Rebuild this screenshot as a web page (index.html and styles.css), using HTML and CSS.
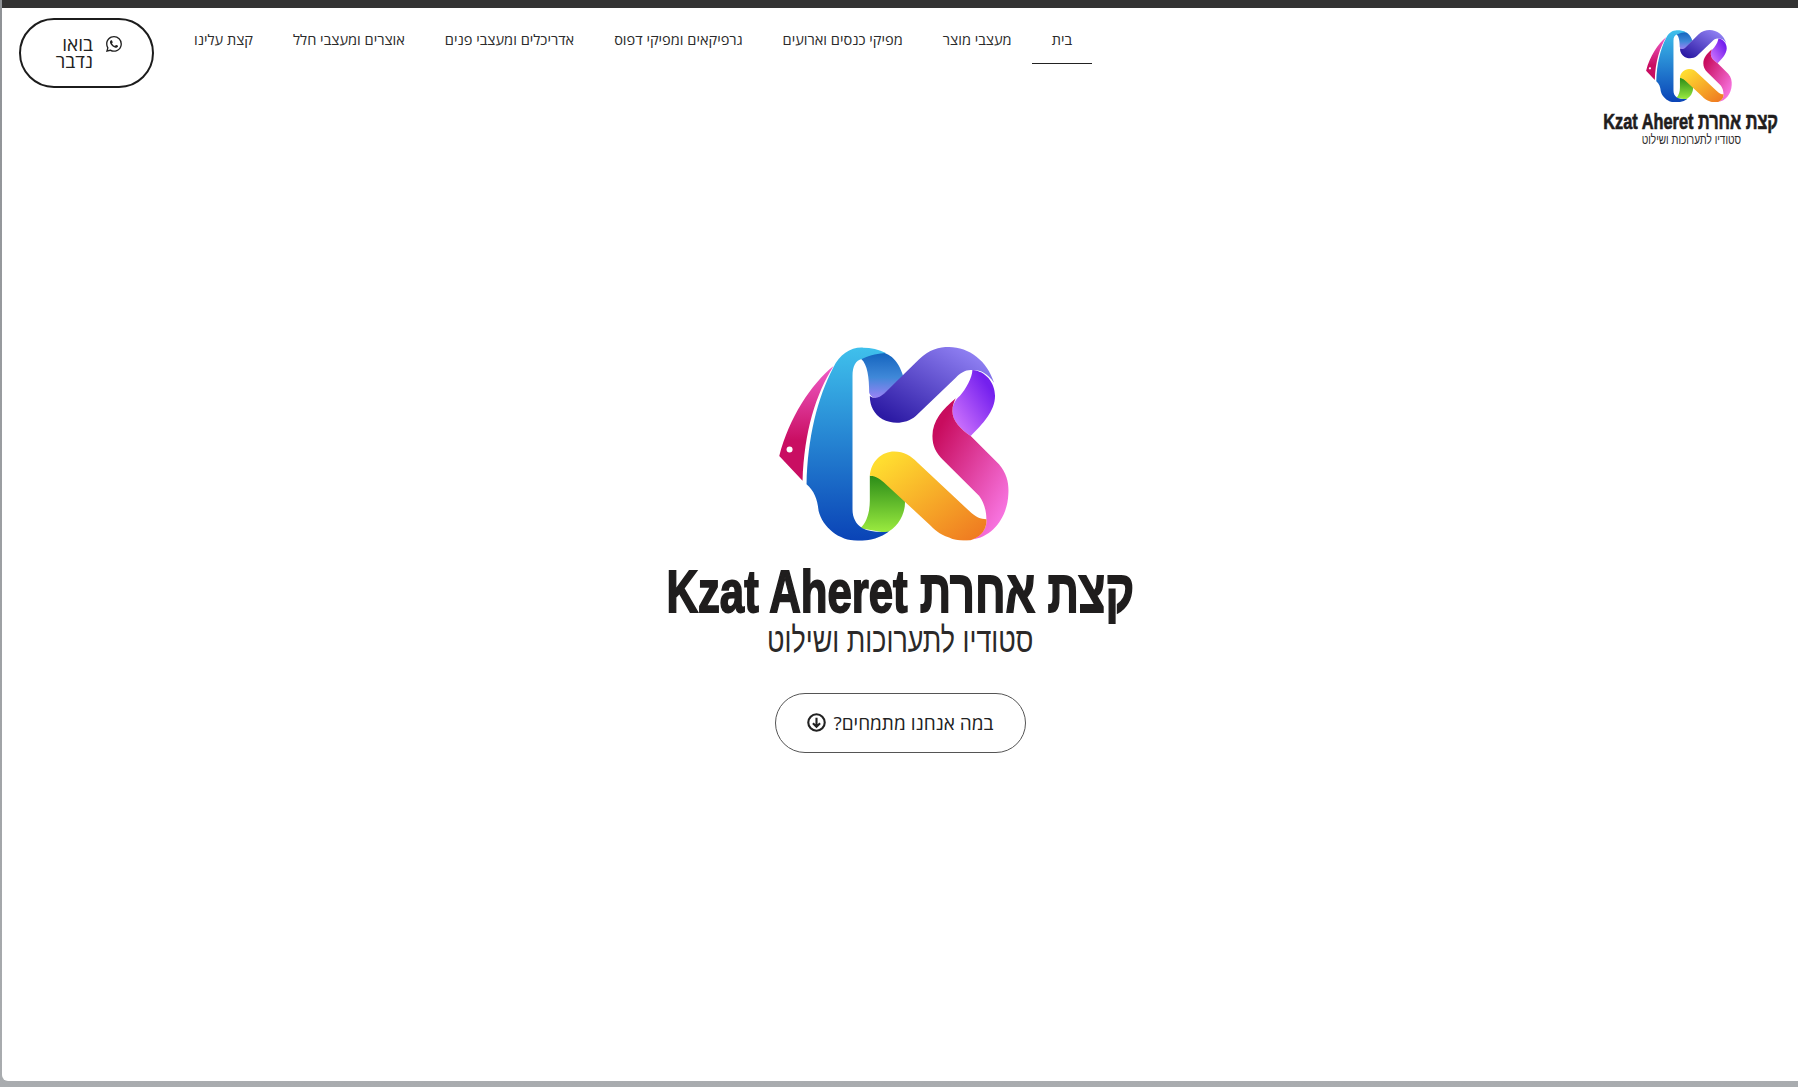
FILE: index.html
```html
<!DOCTYPE html>
<html lang="he" dir="rtl">
<head>
  <meta charset="UTF-8">
  <meta name="viewport" content="width=device-width, initial-scale=1.0">
  <title>קצת אחרת</title>
  <link rel="stylesheet" href="styles.css">
</head>
<body>
  <svg class="defs" width="0" height="0" aria-hidden="true">
    <defs>
      <linearGradient id="gFin" x1="0" y1="0" x2="0" y2="1"><stop offset="0" stop-color="#f05cc8"/><stop offset=".65" stop-color="#c90e62"/></linearGradient>
      <linearGradient id="gBlue" x1="0" y1="0" x2="0" y2="1"><stop offset="0" stop-color="#3fc0ec"/><stop offset="1" stop-color="#0a43b6"/></linearGradient>
      <linearGradient id="gTop" x1="0" y1="0" x2="0" y2="1"><stop offset="0" stop-color="#1262bd"/><stop offset=".55" stop-color="#3f88d8"/><stop offset="1" stop-color="#9a82f5"/></linearGradient>
      <linearGradient id="gPurple" x1="0" y1="1" x2="1" y2="0"><stop offset=".1" stop-color="#2c1aa4"/><stop offset="1" stop-color="#9f90ff"/></linearGradient>
      <linearGradient id="gViolet" x1="1" y1="0" x2="0" y2="1"><stop offset=".2" stop-color="#7420ee"/><stop offset="1" stop-color="#dc80ff"/></linearGradient>
      <linearGradient id="gPink" x1="0" y1="0" x2="1" y2="1"><stop offset=".15" stop-color="#c80c5e"/><stop offset="1" stop-color="#ff85f5"/></linearGradient>
      <linearGradient id="gOrange" x1="0" y1="0" x2="1" y2="1"><stop offset=".1" stop-color="#ffdd30"/><stop offset="1" stop-color="#ee7420"/></linearGradient>
      <linearGradient id="gGreen" x1="0" y1="0" x2="0" y2="1"><stop offset="0" stop-color="#2b8c18"/><stop offset="1" stop-color="#9cec40"/></linearGradient>
      <symbol id="mark" viewBox="120 78 690 582">
        <path fill="url(#gFin)" d="M283 135C215 190 150 290 120 405L190 480C195 330 230 220 283 135Z"/>
        <circle cx="151" cy="386" r="9" fill="#fff"/>
        <path fill="url(#gTop)" d="M366 114C385 88 430 84 458 108C475 123 485 143 492 165L425 228C410 236 394 230 390 215C390 170 385 130 366 114Z"/>
        <path fill="url(#gGreen)" d="M392 465C420 460 445 482 497 535C502 578 475 622 440 636L364 622C383 605 392 572 392 540Z"/>
        <path fill="url(#gBlue)" d="M372 80C335 78 302 100 282 140C235 230 205 350 202 490C225 510 235 535 238 570C250 620 300 660 355 660C395 660 425 650 450 632C420 636 390 632 370 622C350 610 340 590 340 565L340 165C340 135 350 118 368 114C395 100 420 98 440 96C420 85 395 80 372 80Z"/>
        <path fill="url(#gViolet)" d="M700 147C740 150 768 185 768 225C768 270 730 310 695 345C665 325 640 300 640 270C640 250 650 235 662 225C680 205 700 170 700 147Z"/>
        <path fill="url(#gPink)" d="M650 232C610 265 580 300 580 345C580 375 590 395 612 417L720 525C735 545 742 570 742 595C745 625 725 648 698 656C760 650 805 590 808 520C810 490 805 460 780 430L695 345C665 325 640 300 640 270C640 255 645 242 650 232Z"/>
        <path fill="url(#gOrange)" d="M392 465C395 420 430 392 465 392C495 392 515 405 535 425L690 570C710 590 725 595 742 595C745 625 725 650 695 658C670 660 650 660 630 650C600 640 585 625 570 610L440 490C425 475 405 463 392 465Z"/>
        <path fill="url(#gPurple)" d="M392 225C405 235 420 232 435 218L540 115C570 85 600 78 630 78C690 78 745 120 765 185C745 155 720 145 700 147C680 145 665 155 650 170L530 285C500 310 460 310 430 295C405 280 392 255 392 225Z"/>
      </symbol>
    </defs>
  </svg>

  <div class="window">
    <div class="top-strip"></div>

    <header class="site-header">
      <a class="brand brand-small" href="#">
        <svg class="brand-mark"><use href="#mark"/></svg>
        <span class="brand-title">קצת אחרת Kzat Aheret</span>
        <span class="brand-sub">סטודיו לתערוכות ושילוט</span>
      </a>

      <nav class="main-nav">
        <a class="nav-link active" href="#">בית</a>
        <a class="nav-link" href="#">מעצבי מוצר</a>
        <a class="nav-link" href="#">מפיקי כנסים וארועים</a>
        <a class="nav-link" href="#">גרפיקאים ומפיקי דפוס</a>
        <a class="nav-link" href="#">אדריכלים ומעצבי פנים</a>
        <a class="nav-link" href="#">אוצרים ומעצבי חלל</a>
        <a class="nav-link" href="#">קצת עלינו</a>
      </nav>

      <a class="talk-button" href="#">
        <svg class="talk-icon" viewBox="0 0 16 16"><path fill="#222" d="M13.601 2.326A7.854 7.854 0 0 0 7.994 0C3.627 0 .068 3.558.064 7.926c0 1.399.366 2.76 1.057 3.965L0 16l4.204-1.102a7.933 7.933 0 0 0 3.79.965h.004c4.368 0 7.926-3.558 7.93-7.93A7.898 7.898 0 0 0 13.6 2.326zM7.994 14.521a6.573 6.573 0 0 1-3.356-.92l-.24-.144-2.494.654.666-2.433-.156-.251a6.56 6.56 0 0 1-1.007-3.505c0-3.626 2.957-6.584 6.591-6.584a6.56 6.56 0 0 1 4.66 1.931 6.557 6.557 0 0 1 1.928 4.66c-.004 3.639-2.961 6.592-6.592 6.592zm3.615-4.934c-.197-.099-1.17-.578-1.353-.646-.182-.065-.315-.099-.445.099-.133.197-.513.646-.627.775-.114.133-.232.148-.43.05-.197-.1-.836-.308-1.592-.985-.59-.525-.985-1.175-1.103-1.372-.114-.198-.011-.304.088-.403.087-.088.197-.232.296-.346.1-.114.133-.198.198-.33.065-.134.034-.248-.015-.347-.05-.099-.445-1.076-.612-1.47-.16-.389-.323-.335-.445-.34-.114-.007-.247-.007-.38-.007a.729.729 0 0 0-.529.247c-.182.198-.691.677-.691 1.654 0 .977.71 1.916.81 2.049.098.133 1.394 2.132 3.383 2.992.47.205.84.326 1.129.418.475.152.904.129 1.246.08.38-.058 1.171-.48 1.338-.943.164-.464.164-.86.114-.943-.049-.084-.182-.133-.38-.232z"/></svg>
        <span class="talk-text">בואו נדבר</span>
      </a>
    </header>

    <main class="hero">
      <div class="brand brand-large">
        <svg class="brand-mark"><use href="#mark"/></svg>
        <h1 class="brand-title">קצת אחרת Kzat Aheret</h1>
        <span class="brand-sub">סטודיו לתערוכות ושילוט</span>
      </div>

      <a class="hero-button" href="#">
        <span>במה אנחנו מתמחים?</span>
        <svg class="hero-icon" viewBox="0 0 18 18" fill="none" stroke="#222" stroke-width="2"><circle cx="9" cy="9" r="7.8"/><path d="M9 4.6V13M5.6 9.8 9 13l3.4-3.2"/></svg>
      </a>
    </main>
  </div>
</body>
</html>
```

FILE: styles.css
```css
html, body {
  margin: 0;
  height: 100%;
}
body {
  background: linear-gradient(#8f9296, #a9acaf);
  font-family: "Open Sans", "Liberation Sans", sans-serif;
  color: #222;
  overflow: hidden;
}
a {
  color: inherit;
  text-decoration: none;
}
.defs {
  position: absolute;
}
.window {
  height: 1081px;
  margin-left: 2px;
  background: white;
  border-bottom-left-radius: 6px;
  overflow: hidden;
}
.top-strip {
  height: 8px;
  background-color: #333;
}

/* header */
.site-header {
  display: flex;
  align-items: flex-start;
  padding: 10px 20px 0 17px;
  height: 142px;
}
.main-nav {
  display: flex;
  margin-right: auto;
  margin-left: 20px;
}
.nav-link {
  padding: 11px 20px 14px;
  font-size: 14.6px;
  line-height: 20px;
  color: #2b2b2b;
  border-bottom: 1px solid transparent;
}
.nav-link.active {
  border-bottom-color: #222;
}
.talk-button {
  display: flex;
  align-items: center;
  justify-content: center;
  gap: 13px;
  box-sizing: border-box;
  width: 135px;
  height: 70px;
  padding: 0 0 1px 6px;
  border: 2.5px solid #1c1c1c;
  border-radius: 35px;
  font-size: 19px;
  line-height: 17px;
}
.talk-icon {
  width: 16px;
  height: 16px;
  margin-top: -17px;
}
.talk-text {
  width: 36px;
}

/* logo lockup, same proportions at both sizes */
.brand {
  display: flex;
  flex-direction: column;
  align-items: center;
  width: 8.16em;
  white-space: nowrap;
}
.brand-mark {
  display: block;
  flex-shrink: 0;
  width: 4.04em;
  height: 3.4em;
  margin-right: .2em;
}
.brand-title {
  margin: .33em 0 0;
  font-family: "Liberation Sans", sans-serif;
  font-size: 1.05em;
  font-weight: 700;
  line-height: 1.02em;
  color: #1f1d1d;
  transform: scaleX(.73);
  -webkit-text-stroke: .03em #1f1d1d;
}
.brand-sub {
  font-family: "Liberation Sans", sans-serif;
  font-size: .62em;
  line-height: 1em;
  color: #2b2929;
  transform: scaleX(.76);
}
.brand-large {
  font-size: 57px;
}
.brand-small {
  font-size: 21.3px;
  margin-top: 12px;
}
.brand-small .brand-title {
  margin-top: 9px;
}
.brand-small .brand-sub {
  margin-top: -1px;
}

/* hero */
.hero {
  display: flex;
  flex-direction: column;
  align-items: center;
  padding-top: 187px;
}
.hero-button {
  display: flex;
  align-items: center;
  justify-content: center;
  gap: 8px;
  box-sizing: border-box;
  width: 251px;
  height: 60px;
  margin-top: 36px;
  border: 1px solid #555;
  border-radius: 30px;
  font-size: 19px;
}
.hero-icon {
  width: 19px;
  height: 19px;
}
```
